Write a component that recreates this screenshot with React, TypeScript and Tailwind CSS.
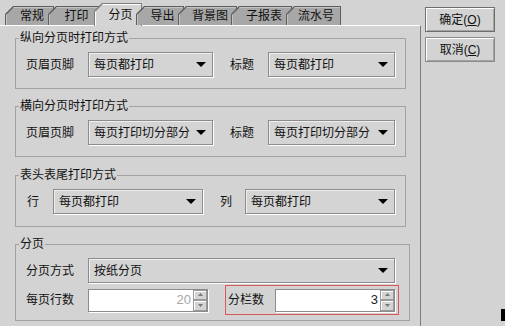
import React from 'react';

const tabs = [
  { label: '常规', w: 'w-[49px]', active: false },
  { label: '打印', w: 'w-[52px]', active: false },
  { label: '分页', w: 'w-[48px]', active: true },
  { label: '导出', w: 'w-[48px]', active: false },
  { label: '背景图', w: 'w-[59px]', active: false },
  { label: '子报表', w: 'w-[61px]', active: false },
  { label: '流水号', w: 'w-[55px]', active: false },
];

const Tab: React.FC<{ label: string; w: string; active: boolean }> = ({ label, w, active }) => (
  <div
    className={`${w} relative -mr-[6px] pl-px pt-px pr-px [clip-path:polygon(8px_0,100%_0,100%_100%,0_100%,0_8px)] ${
      active ? 'h-[23px] -mb-px bg-[#7c7c7c]' : 'h-[19px] bg-[#5e5e5e]'
    }`}
  >
    <div
      className={`h-full flex items-center justify-center pl-[5px] [clip-path:polygon(8px_0,100%_0,100%_100%,0_100%,0_8px)] ${
        active ? 'bg-[#d4d4d4] shadow-[inset_1px_1px_0_#fff]' : 'bg-[#a7a7a7] shadow-[inset_1px_1px_0_#c4c4c4]'
      }`}
    >
      {label}
    </div>
  </div>
);

const Combo: React.FC<{ value: string; w: string }> = ({ value, w }) => (
  <div
    className={`${w} shrink-0 h-[25px] flex items-center justify-between pl-[5px] pr-[6px] border border-[#8c8c8c] bg-[#d4d4d4] shadow-[1px_1px_0_#fff,inset_1px_1px_0_#efefef]`}
  >
    <span className="whitespace-nowrap">{value}</span>
    <svg width="10" height="5" viewBox="0 0 10 5" className="shrink-0">
      <path d="M0 0H10L5 5Z" fill="#000" />
    </svg>
  </div>
);

const SpinBtn: React.FC<{ up?: boolean }> = ({ up }) => (
  <div className="flex-1 flex items-center justify-center bg-[#d4d4d4] border border-[#9a9a9a] shadow-[inset_1px_1px_0_#fff]">
    <svg width="5" height="3" viewBox="0 0 5 3">
      <path d={up ? 'M0 3H5L2.5 0Z' : 'M0 0H5L2.5 3Z'} fill="#777" />
    </svg>
  </div>
);

const Spinner: React.FC<{ value: string; disabled?: boolean }> = ({ value, disabled }) => (
  <div className="w-[120px] shrink-0 h-[23px] flex border border-[#8c8c8c] shadow-[1px_1px_0_#fff]">
    <div
      className={`flex-1 bg-white flex items-center justify-end pr-[2px] text-[13px] ${
        disabled ? 'text-[#a6a6a6]' : 'text-[#222]'
      }`}
    >
      {value}
    </div>
    <div className="w-[14px] flex flex-col">
      <SpinBtn up />
      <SpinBtn />
    </div>
  </div>
);

const Group: React.FC<{ title: string; className?: string; children: React.ReactNode }> = ({
  title,
  className = '',
  children,
}) => (
  <fieldset className={`border border-[#a2a2a2] px-[10px] pt-[7px] ${className}`}>
    <legend className="-ml-[7px] px-px leading-[14px]">{title}</legend>
    {children}
  </fieldset>
);

export default function App() {
  return (
    <div className="w-[505px] h-[326px] relative overflow-hidden flex bg-[#d3d3d3] text-[12px] leading-[14px] text-[#111] font-['Liberation_Sans','Noto_Sans_CJK_SC',sans-serif]">
      <div className="w-[421px] flex flex-col">
        <div className="h-[25px] pl-[5px] flex items-end relative z-10">
          {tabs.map((t) => (
            <Tab key={t.label} {...t} />
          ))}
        </div>

        <div className="flex-1 border-t border-r border-t-white border-r-[#7c7c7c] pl-[15px] pr-[14px] pt-[5px] flex flex-col">
          <Group title="纵向分页时打印方式" className="pb-[11px]">
            <div className="flex items-center">
              <span className="w-[62px]">页眉页脚</span>
              <Combo value="每页都打印" w="w-[125px]" />
              <span className="ml-[17px] w-[38px]">标题</span>
              <Combo value="每页都打印" w="w-[127px]" />
            </div>
          </Group>

          <Group title="横向分页时打印方式" className="mt-[10px] pb-[11px]">
            <div className="flex items-center">
              <span className="w-[62px]">页眉页脚</span>
              <Combo value="每页打印切分部分" w="w-[125px]" />
              <span className="ml-[17px] w-[38px]">标题</span>
              <Combo value="每页打印切分部分" w="w-[127px]" />
            </div>
          </Group>

          <Group title="表头表尾打印方式" className="mt-[11px] pb-[12px]">
            <div className="flex items-center">
              <span className="w-[27px] pl-px">行</span>
              <Combo value="每页都打印" w="w-[150px]" />
              <span className="ml-[17px] w-[25px]">列</span>
              <Combo value="每页都打印" w="w-[150px]" />
            </div>
          </Group>

          <Group title="分页" className="mt-[10px] pb-[5px]">
            <div className="flex items-center">
              <span className="w-[62px]">分页方式</span>
              <Combo value="按纸分页" w="w-[307px]" />
            </div>
            <div className="flex items-center mt-[2px]">
              <span className="w-[62px]">每页行数</span>
              <Spinner value="20" disabled />
              <div className="ml-[17px] h-[30px] flex items-center pl-[2px] pr-[3px] border border-[#d9585a]">
                <span className="w-[47px]">分栏数</span>
                <Spinner value="3" />
              </div>
            </div>
          </Group>
        </div>
      </div>

      <div className="flex-1 pl-[4px] pt-[7px] flex flex-col gap-[5px]">
        <button className="w-[70px] h-[25px] flex items-center justify-center bg-[#d3d3d3] border border-[#6e6e6e] shadow-[inset_1px_1px_0_#fff,inset_-1px_-1px_0_#a4a4a4]">
          确定(<span className="underline">O</span>)
        </button>
        <button className="w-[70px] h-[25px] flex items-center justify-center bg-[#d3d3d3] border border-[#8a8a8a] shadow-[inset_1px_1px_0_#fff,inset_-1px_-1px_0_#a4a4a4]">
          取消(<span className="underline">C</span>)
        </button>
      </div>

      <div className="absolute left-[501px] top-[309px] w-[4px] h-[12px] bg-black" />
    </div>
  );
}
